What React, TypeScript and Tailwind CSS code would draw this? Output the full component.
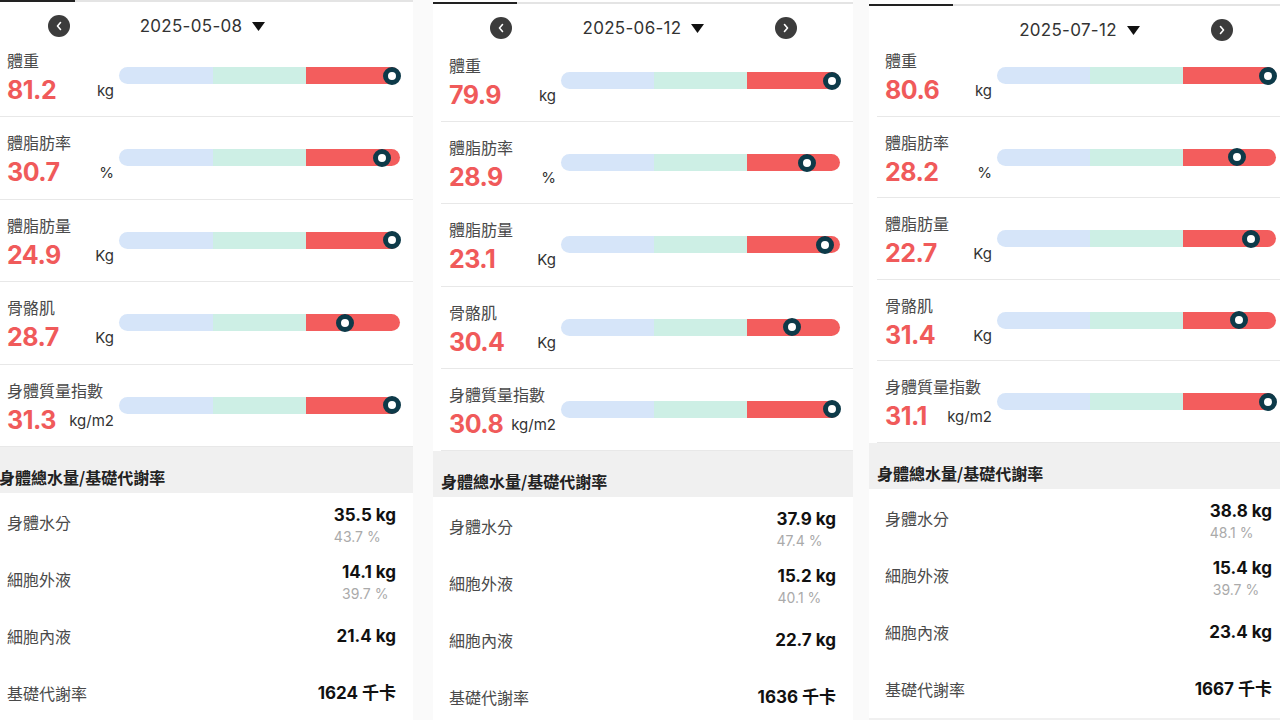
import React from "react";

type Row = { label: string; value: string; unit: string; pos: number };
type ListRow = { label: string; value: string; sub?: string };
type PanelProps = {
  cls: string;
  topCls: string;
  navCls: string;
  rowCls: string;
  date: string;
  prev: boolean;
  next: boolean;
  rows: Row[];
  list: ListRow[];
};

const Chevron = ({ dir }: { dir: "l" | "r" }) => (
  <svg width="8" height="10" viewBox="0 0 8 10" fill="none">
    <path
      d={dir === "l" ? "M5.5 1.5 L2.5 5 L5.5 8.5" : "M2.5 1.5 L5.5 5 L2.5 8.5"}
      stroke="white"
      strokeWidth="1.6"
      strokeLinecap="round"
      strokeLinejoin="round"
    />
  </svg>
);

const NavBtn = ({ dir, show }: { dir: "l" | "r"; show: boolean }) => (
  <div
    className={
      show
        ? "w-[22px] h-[22px] rounded-full bg-[#3c3c3c] flex items-center justify-center shrink-0"
        : "w-[22px] h-[22px] shrink-0"
    }
  >
    {show && <Chevron dir={dir} />}
  </div>
);

const Bar = ({ pos }: { pos: number }) => (
  <div className="relative h-[17px] flex">
    <div className="flex-1 bg-[#d6e5f9] rounded-l-full" />
    <div className="flex-1 bg-[#cdefe5]" />
    <div className="flex-1 bg-[#f35d5d] rounded-r-full" />
    <div
      className="absolute top-1/2 -translate-y-1/2 -translate-x-1/2 w-[18px] h-[18px] rounded-full border-[5px] border-[#0d3a49] bg-white"
      style={{ left: `${pos * 100}%` }}
    />
  </div>
);

const Panel = (p: PanelProps) => (
  <div className={`shrink-0 bg-white flex flex-col ${p.cls}`}>
    <div className={`bg-white ${p.topCls}`}>
      <div className="flex h-[2px]">
        <div className="w-[84px] bg-[#222222]" />
        <div className="flex-1 bg-[#e4e4e4]" />
      </div>
    </div>
    <div className={`flex items-start pt-[13px] pl-[57px] pr-[56px] ${p.navCls}`}>
      <NavBtn dir="l" show={p.prev} />
      <div className="flex-1 h-[22px] flex items-center justify-center">
        <span className="text-[17px] leading-[22px] text-[#333333] tracking-[0.3px]">{p.date}</span>
        <svg className="ml-[10px]" width="13" height="9" viewBox="0 0 13 9">
          <polygon points="0,0 13,0 6.5,9" fill="#111111" />
        </svg>
      </div>
      <NavBtn dir="r" show={p.next} />
    </div>
    <div className="flex flex-col">
      {p.rows.map((r) => (
        <div key={r.label} className={`ml-2 border-b border-[#e8e8e8] flex ${p.rowCls}`}>
          <div className="w-[115px] pl-2 pt-[14px] flex flex-col">
            <div className="text-[16px] leading-[22px] text-[#4a4a4a] font-['Noto_Sans_CJK_TC',sans-serif]">
              {r.label}
            </div>
            <div className="mt-[5px] h-[28px] flex items-center justify-between">
              <span className="text-[25px] leading-[28px] font-bold text-[#f05a5a] tracking-[-0.5px]">{r.value}</span>
              <span className="text-[15px] leading-[20px] text-[#333333] pt-[2px]">{r.unit}</span>
            </div>
          </div>
          <div className="flex-1 pl-[5px] pr-[13px] pt-[32px]">
            <Bar pos={r.pos} />
          </div>
        </div>
      ))}
    </div>
    <div className="h-[46px] bg-[#f0f0f0] flex items-end pb-[5px] pl-2">
      <span className="text-[16px] leading-[22px] font-bold text-[#222222] font-['Noto_Sans_CJK_TC',sans-serif]">
        身體總水量/基礎代謝率
      </span>
    </div>
    <div className="flex flex-col">
      {p.list.map((l) => (
        <div key={l.label} className="h-[57.2px] flex items-center justify-between pl-4 pr-[17px]">
          <span className="text-[16px] leading-[22px] text-[#4a4a4a] font-['Noto_Sans_CJK_TC',sans-serif]">
            {l.label}
          </span>
          {l.sub ? (
            <div className="flex flex-col items-start pt-[6px]">
              <span className="text-[17px] leading-[20px] font-bold text-[#111111]">{l.value}</span>
              <span className="mt-[4px] text-[14px] leading-[16px] text-[#aaaaaa]">{l.sub}</span>
            </div>
          ) : (
            <span className="text-[17px] leading-[20px] font-bold text-[#111111]">{l.value}</span>
          )}
        </div>
      ))}
    </div>
    <div className="h-[40px] bg-[#f0f0f0]" />
  </div>
);

export default function App() {
  return (
    <div className="w-[1280px] h-[720px] overflow-hidden flex items-start bg-[#fafafa] font-['Inter','Noto_Sans_CJK_TC',sans-serif]">
      <Panel
        cls="w-[422px] ml-[-9px]"
        topCls="pt-0"
        navCls="h-[33px]"
        rowCls="h-[82.4px]"
        date="2025-05-08"
        prev
        next={false}
        rows={[
          { label: "體重", value: "81.2", unit: "kg", pos: 0.972 },
          { label: "體脂肪率", value: "30.7", unit: "%", pos: 0.936 },
          { label: "體脂肪量", value: "24.9", unit: "Kg", pos: 0.972 },
          { label: "骨骼肌", value: "28.7", unit: "Kg", pos: 0.805 },
          { label: "身體質量指數", value: "31.3", unit: "kg/m2", pos: 0.972 },
        ]}
        list={[
          { label: "身體水分", value: "35.5 kg", sub: "43.7 %" },
          { label: "細胞外液", value: "14.1 kg", sub: "39.7 %" },
          { label: "細胞內液", value: "21.4 kg" },
          { label: "基礎代謝率", value: "1624 千卡" },
        ]}
      />
      <Panel
        cls="w-[420px] ml-[20px]"
        topCls="pt-[2px]"
        navCls="h-[36px]"
        rowCls="h-[82.2px]"
        date="2025-06-12"
        prev
        next
        rows={[
          { label: "體重", value: "79.9", unit: "kg", pos: 0.971 },
          { label: "體脂肪率", value: "28.9", unit: "%", pos: 0.882 },
          { label: "體脂肪量", value: "23.1", unit: "Kg", pos: 0.946 },
          { label: "骨骼肌", value: "30.4", unit: "Kg", pos: 0.828 },
          { label: "身體質量指數", value: "30.8", unit: "kg/m2", pos: 0.971 },
        ]}
        list={[
          { label: "身體水分", value: "37.9 kg", sub: "47.4 %" },
          { label: "細胞外液", value: "15.2 kg", sub: "40.1 %" },
          { label: "細胞內液", value: "22.7 kg" },
          { label: "基礎代謝率", value: "1636 千卡" },
        ]}
      />
      <Panel
        cls="w-[420px] ml-[16px]"
        topCls="pt-[4px]"
        navCls="h-[29px]"
        rowCls="h-[81.6px]"
        date="2025-07-12"
        prev={false}
        next
        rows={[
          { label: "體重", value: "80.6", unit: "kg", pos: 0.971 },
          { label: "體脂肪率", value: "28.2", unit: "%", pos: 0.86 },
          { label: "體脂肪量", value: "22.7", unit: "Kg", pos: 0.91 },
          { label: "骨骼肌", value: "31.4", unit: "Kg", pos: 0.867 },
          { label: "身體質量指數", value: "31.1", unit: "kg/m2", pos: 0.971 },
        ]}
        list={[
          { label: "身體水分", value: "38.8 kg", sub: "48.1 %" },
          { label: "細胞外液", value: "15.4 kg", sub: "39.7 %" },
          { label: "細胞內液", value: "23.4 kg" },
          { label: "基礎代謝率", value: "1667 千卡" },
        ]}
      />
    </div>
  );
}
